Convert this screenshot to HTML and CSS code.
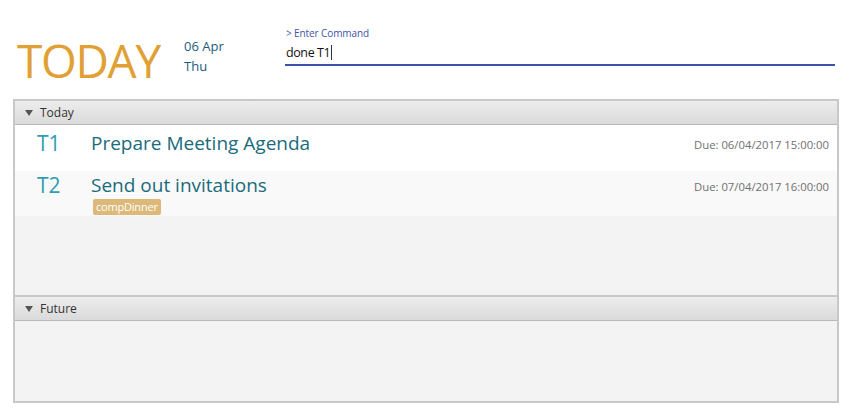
FILE: index.html
```html
<!DOCTYPE html>
<html>
<head>
<meta charset="utf-8">
<link rel="stylesheet" href="styles.css">
</head>
<body>
<header class="top">
  <div class="today">TODAY</div>
  <div class="date">
    <div>06 Apr</div>
    <div>Thu</div>
  </div>
  <div class="command">
    <div class="cmd-label">&gt; Enter Command</div>
    <div class="cmd-input"><span>done T1</span><span class="caret"></span></div>
  </div>
</header>
<main class="panel">
  <section class="pane pane-today">
    <div class="pane-head"><span class="tri"></span>Today</div>
    <div class="pane-body">
      <div class="task">
        <div class="tid">T1</div>
        <div class="tmain">
          <div class="ttitle">Prepare Meeting Agenda</div>
        </div>
        <div class="tdue">Due: 06/04/2017 15:00:00</div>
      </div>
      <div class="task alt">
        <div class="tid">T2</div>
        <div class="tmain">
          <div class="ttitle">Send out invitations</div>
          <div class="tags"><span class="tag">compDinner</span></div>
        </div>
        <div class="tdue">Due: 07/04/2017 16:00:00</div>
      </div>
    </div>
  </section>
  <section class="pane pane-future">
    <div class="pane-head"><span class="tri"></span>Future</div>
    <div class="pane-body"></div>
  </section>
</main>
</body>
</html>
```

FILE: styles.css
```css
html, body {
  margin: 0;
  padding: 0;
  background: #ffffff;
  font-family: "Open Sans", "Noto Sans", sans-serif;
}

.top {
  height: 99px;
  display: flex;
  align-items: flex-start;
  box-sizing: border-box;
}

.today {
  margin-left: 17px;
  margin-top: 30px;
  font-size: 46px;
  line-height: 60px;
  color: #e0a033;
  letter-spacing: -1.3px;
  width: 167px;
}

.date {
  margin-top: 36px;
  font-size: 13px;
  line-height: 20px;
  color: #1b5c7c;
  width: 101px;
}

.command {
  margin-top: 26px;
  width: 550px;
}

.cmd-label {
  font-size: 10px;
  line-height: 14px;
  color: #4253a8;
  padding-left: 1px;
  letter-spacing: -0.1px;
}

.cmd-input {
  height: 24px;
  display: flex;
  align-items: center;
  font-size: 12.5px;
  letter-spacing: -0.4px;
  color: #111;
  padding-left: 1px;
  border-bottom: 2px solid #3f51a8;
}

.caret {
  display: inline-block;
  width: 1px;
  height: 15px;
  background: #333;
  margin-left: 1px;
}

.panel {
  margin-left: 13px;
  width: 826px;
  box-sizing: border-box;
  border: 2px solid #c8c8c8;
  background: #f3f3f3;
}

.pane-head {
  height: 23px;
  border-bottom: 1px solid #b8b8b8;
  background: linear-gradient(#ededed, #dadada);
  display: flex;
  align-items: center;
  font-size: 12px;
  color: #333;
  padding-left: 10px;
}

.tri {
  width: 0;
  height: 0;
  border-left: 4px solid transparent;
  border-right: 4px solid transparent;
  border-top: 6px solid #555;
  margin-right: 7px;
}

.pane-today .pane-body {
  height: 170px;
}

.pane-future {
  border-top: 2px solid #c8c8c8;
}

.pane-future .pane-body {
  height: 80px;
}

.task {
  height: 46px;
  display: flex;
  align-items: flex-start;
  background: #ffffff;
}

.task.alt {
  background: #f9f9f9;
  height: 45px;
}

.tid {
  width: 76px;
  padding-left: 22px;
  box-sizing: border-box;
  font-size: 21px;
  line-height: 30px;
  margin-top: 3px;
  color: #2f9db3;
}

.tmain {
  flex: 1;
  margin-top: 4px;
}

.alt .tid {
  margin-top: -1px;
}

.alt .tmain {
  margin-top: 0;
}

.ttitle {
  font-size: 19px;
  line-height: 28px;
  color: #1a6b7c;
}

.tags {
  display: flex;
  margin-top: 0;
  padding-left: 2px;
}

.tag {
  background: #dcb978;
  color: #ffffff;
  font-size: 11px;
  line-height: 16px;
  padding: 0 3px;
  border-radius: 2px;
  letter-spacing: -0.2px;
}

.tdue {
  margin-top: 12px;
  margin-right: 8px;
  font-size: 11.3px;
  line-height: 16px;
  color: #707070;
}

.alt .tdue {
  margin-top: 8px;
}
```
